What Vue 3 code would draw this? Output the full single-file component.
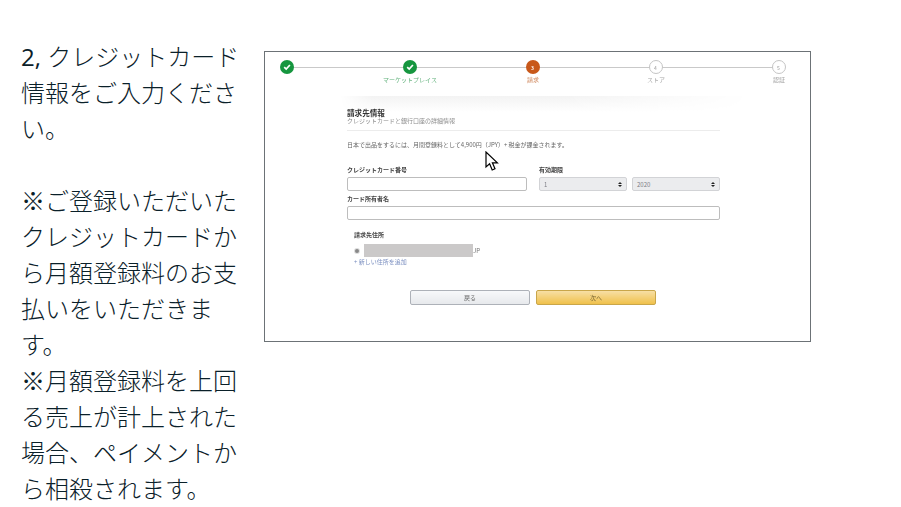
<script setup>
const steps = [
  { label: '', state: 'done' },
  { label: 'マーケットプレイス', state: 'done' },
  { label: '請求', state: 'active', n: 3 },
  { label: 'ストア', state: 'todo', n: 4 },
  { label: '認証', state: 'todo', n: 5 },
]
</script>

<template>
  <div class="page">
    <p class="copy">
      <span class="num">2,</span> クレジットカード<br>情報をご入力くださ<br>い。<br><br>※ご登録いただいた<br>クレジットカードか<br>ら月額登録料のお支<br>払いをいただきま<br>す。<br>※月額登録料を上回<br>る売上が計上された<br>場合、ペイメントか<br>ら相殺されます。
    </p>
    <div class="shot">
      <div class="inner">
        <div class="stepper">
          <div class="track"></div>
          <div v-for="(s, i) in steps" :key="i" class="step">
            <div class="dot" :class="s.state">
              <svg v-if="s.state === 'done'" width="8" height="8" viewBox="0 0 8 8">
                <path d="M1.2 4.2 3.2 6.1 6.9 2" fill="none" stroke="#fff" stroke-width="1.7" />
              </svg>
              <template v-else>{{ s.n }}</template>
            </div>
            <div class="step-label" :class="s.state">{{ s.label }}</div>
          </div>
        </div>

        <div class="form">
          <div class="fade"></div>
          <div class="title">請求先情報</div>
          <div class="sub">クレジットカードと銀行口座の詳細情報</div>
          <div class="rule"></div>
          <div class="notice">日本で出品をするには、月間登録料として4,900円（JPY）+ 税金が課金されます。</div>

          <div class="row">
            <div class="col-card">
              <div class="label">クレジットカード番号</div>
              <div class="input"></div>
            </div>
            <div class="col-exp">
              <div class="label">有効期限</div>
              <div class="selects">
                <div class="select">
                  <span>1</span>
                  <svg width="4" height="5" viewBox="0 0 4 5"><path d="M2 0 4 2H0ZM2 5 0 3H4Z" fill="#222" /></svg>
                </div>
                <div class="select">
                  <span>2020</span>
                  <svg width="4" height="5" viewBox="0 0 4 5"><path d="M2 0 4 2H0ZM2 5 0 3H4Z" fill="#222" /></svg>
                </div>
              </div>
            </div>
          </div>

          <div class="label name-label">カード所有者名</div>
          <div class="input name-input"></div>

          <div class="billing">
            <div class="label">請求先住所</div>
            <div class="addr">
              <span class="radio"></span>
              <span class="mask"></span>
              <span class="jp">JP</span>
            </div>
            <div class="add">+ 新しい住所を追加</div>
          </div>

          <div class="buttons">
            <div class="btn back">戻る</div>
            <div class="btn next">次へ</div>
          </div>
        </div>

        <svg class="cursor" width="15" height="21" viewBox="0 0 15 21">
          <path d="M1 1V16L4.6 12.8 7.2 19 10 17.8 7.4 11.8H12.4Z" fill="#fff" stroke="#000" stroke-width="1.2" />
        </svg>
      </div>
    </div>
  </div>
</template>

<style scoped>
.page {
  width: 901px;
  height: 507px;
  overflow: hidden;
  display: flex;
  align-items: flex-start;
  background: #fff;
  font-family: "Open Sans", "Noto Sans CJK JP", sans-serif;
}
.copy {
  margin: 39px 0 0 21px;
  width: 243px;
  flex: none;
  font-size: 24px;
  line-height: 36px;
  font-weight: 300;
  color: #0a2029;
  white-space: nowrap;
}
.num { font-weight: 400; }
.shot {
  margin-top: 51px;
  width: 547px;
  height: 291px;
  box-sizing: border-box;
  border: 1px solid #6c7276;
  flex: none;
  background: #fff;
}
.inner {
  position: relative;
  width: 100%;
  height: 100%;
  font-family: "Noto Sans CJK JP", sans-serif;
  filter: blur(0.6px);
}
.stepper {
  position: relative;
  display: flex;
  padding: 8px 0 0 0;
  margin-left: -40px;
}
.track {
  position: absolute;
  left: 61px;
  top: 14.5px;
  width: 492px;
  height: 1px;
  background: #c9c9c9;
}
.step {
  position: relative;
  width: 123px;
  flex: none;
  display: flex;
  flex-direction: column;
  align-items: center;
}
.dot {
  width: 14px;
  height: 14px;
  border-radius: 50%;
  box-sizing: border-box;
  display: flex;
  align-items: center;
  justify-content: center;
  font-size: 5px;
  background: #fff;
}
.dot.done { background: #16963f; }
.dot.active { background: #c8581a; color: #fff; font-weight: 700; }
.dot.todo { border: 1px solid #c4c4c4; color: #9a9a9a; }
.step-label {
  margin-top: 1px;
  padding-left: 1px;
  font-size: 6px;
  line-height: 9px;
  height: 9px;
  white-space: nowrap;
}
.step-label.done { color: #63b27d; }
.step-label.active { color: #d0895f; }
.step-label.todo { color: #a8a8a8; }
.form {
  position: relative;
  display: flow-root;
  margin: 14px 0 0 82px;
  width: 373px;
}
.fade {
  position: absolute;
  left: -7px;
  top: -2px;
  width: 410px;
  height: 16px;
  background: linear-gradient(#f3f3f3, #fff);
  -webkit-mask-image: linear-gradient(90deg, transparent, #000 8%, #000 55%, transparent);
  mask-image: linear-gradient(90deg, transparent, #000 8%, #000 55%, transparent);
}
.title {
  position: relative;
  margin-top: 10px;
  font-size: 7.6px;
  line-height: 9px;
  font-weight: 700;
  color: #333;
}
.sub {
  position: relative;
  font-size: 6px;
  line-height: 8px;
  color: #8c8c8c;
  white-space: nowrap;
}
.rule {
  margin-top: 5px;
  height: 1px;
  background: #ececec;
}
.notice {
  margin-top: 10px;
  font-size: 6px;
  line-height: 8px;
  color: #666;
  white-space: nowrap;
}
.row {
  display: flex;
  margin-top: 17px;
  gap: 12px;
}
.col-card { width: 180px; }
.col-exp { width: 181px; }
.label {
  font-size: 6px;
  line-height: 8px;
  font-weight: 700;
  color: #444;
  white-space: nowrap;
}
.input {
  margin-top: 3px;
  height: 14px;
  box-sizing: border-box;
  border: 1px solid #bdbdbd;
  border-radius: 2px;
  background: #fff;
}
.selects {
  margin-top: 3px;
  display: flex;
  gap: 5px;
}
.select {
  flex: 1;
  height: 14px;
  box-sizing: border-box;
  border: 1px solid #d2d3d6;
  border-radius: 2px;
  background: #ebecee;
  display: flex;
  align-items: center;
  justify-content: space-between;
  padding: 0 4px;
  font-size: 6px;
  color: #7d7d85;
}
.name-label { margin-top: 4px; }
.name-input {
  margin-top: 3px;
  width: 373px;
  height: 14px;
}
.billing {
  margin: 11px 0 0 7px;
}
.addr {
  display: flex;
  align-items: center;
  margin-top: 5px;
  height: 13px;
}
.radio {
  width: 4px;
  height: 4px;
  margin: 0 5px 0 1px;
  border-radius: 50%;
  background: #888;
  box-shadow: 0 0 0 1px #ddd;
}
.mask {
  width: 109px;
  height: 13px;
  background: #cbc9c9;
}
.jp {
  font-size: 6px;
  color: #777;
}
.add {
  margin-top: 1px;
  font-size: 6px;
  line-height: 8px;
  color: #7b8fc0;
  white-space: nowrap;
}
.buttons {
  display: flex;
  gap: 6px;
  margin: 24px 0 0 63px;
}
.btn {
  width: 120px;
  height: 15px;
  box-sizing: border-box;
  border-radius: 2px;
  display: flex;
  align-items: center;
  justify-content: center;
  font-size: 6px;
  color: #666;
}
.back {
  border: 1px solid #adb1b8;
  background: linear-gradient(#f7f8fa, #e7e9ec);
}
.next {
  border: 1px solid #c9a64a;
  background: linear-gradient(#f7dfa5, #f0c14b);
  color: #7a6630;
}
.cursor {
  position: absolute;
  left: 220px;
  top: 99px;
}
</style>
